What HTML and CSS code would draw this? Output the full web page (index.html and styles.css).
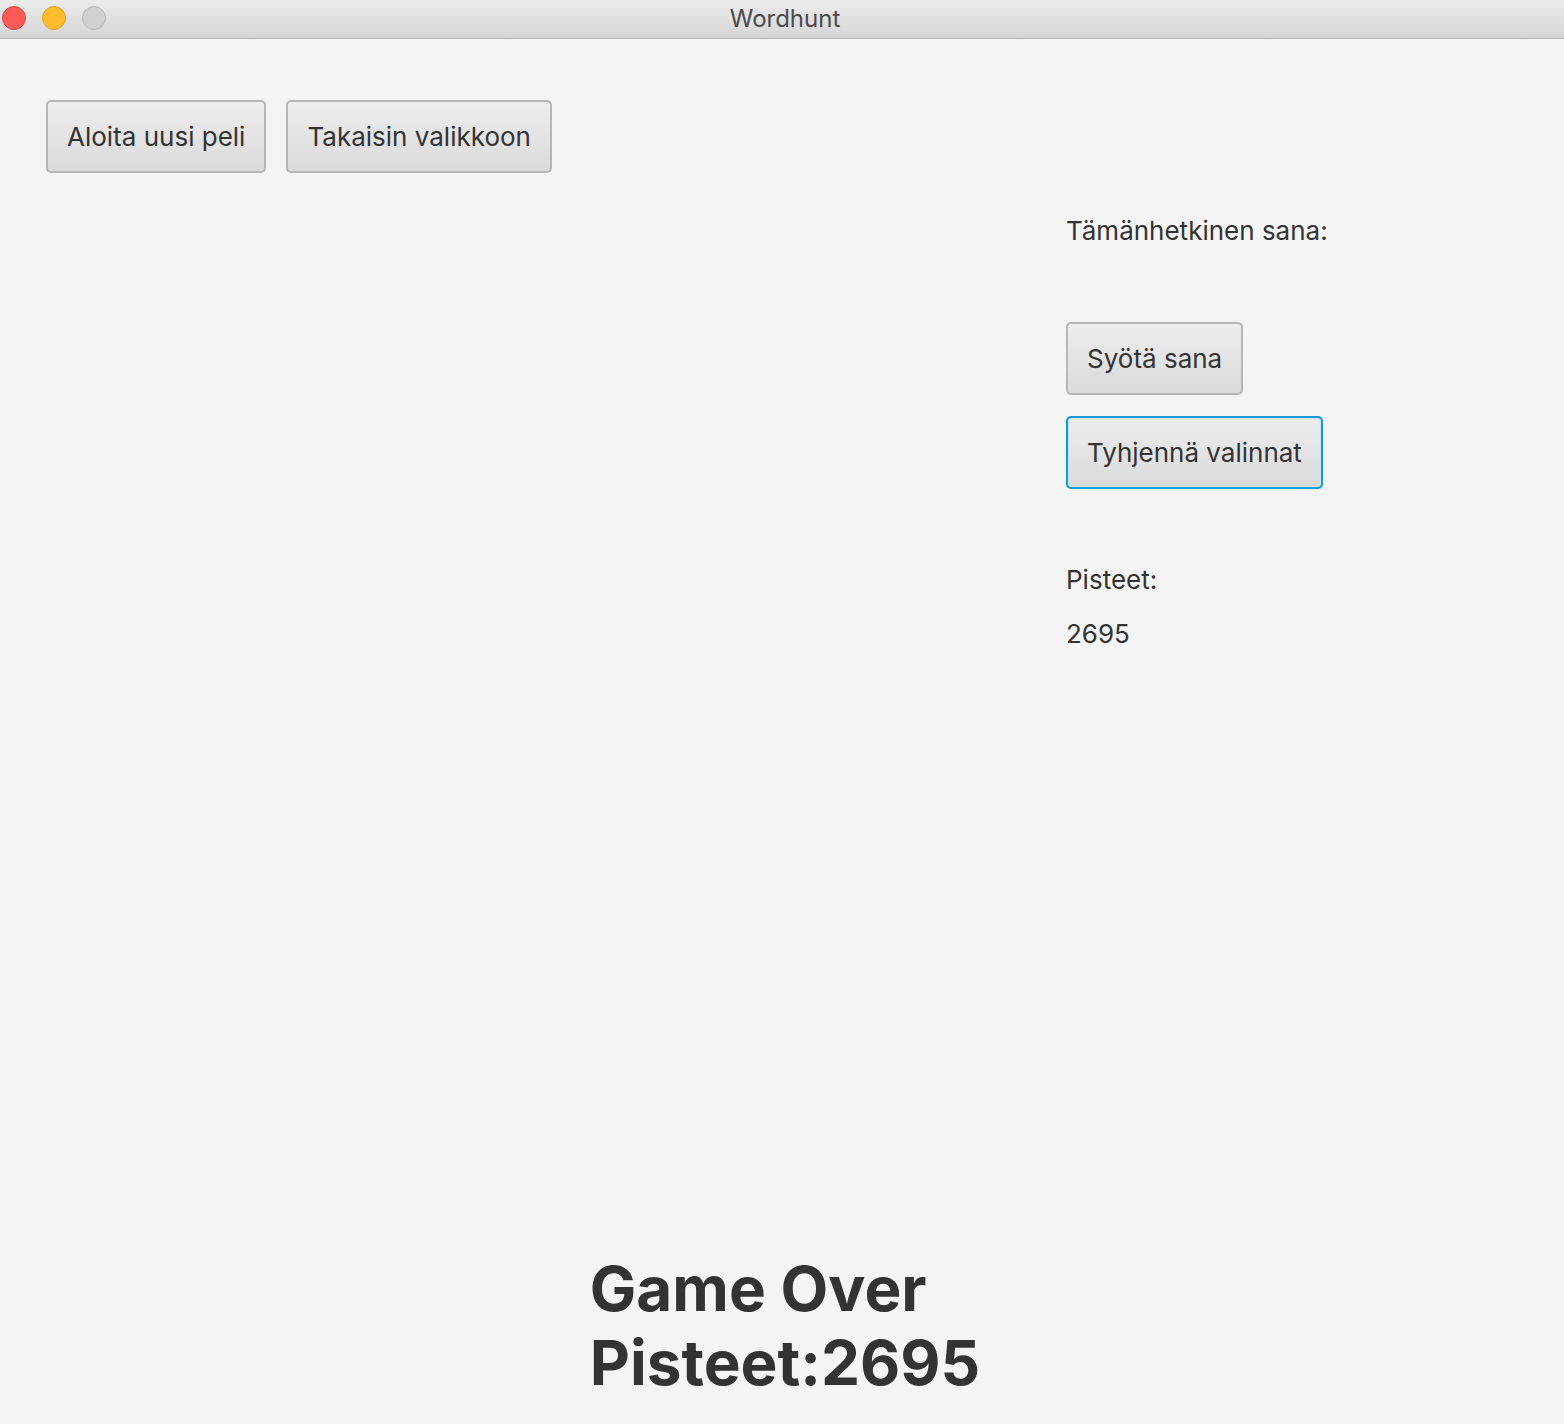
FILE: index.html
```html
<!DOCTYPE html>
<html lang="fi">
<head>
<meta charset="utf-8">
<title>Wordhunt</title>
<link rel="stylesheet" href="styles.css">
</head>
<body>
<div class="window">
  <header class="titlebar">
    <div class="lights">
      <span class="light red"></span>
      <span class="light yellow"></span>
      <span class="light grey"></span>
    </div>
    <div class="title">Wordhunt</div>
  </header>
  <main class="content">
    <div class="toolbar">
      <button class="btn">Aloita uusi peli</button>
      <button class="btn">Takaisin valikkoon</button>
    </div>
    <section class="side">
      <div class="label current">Tämänhetkinen sana:</div>
      <button class="btn">Syötä sana</button>
      <button class="btn focused">Tyhjennä valinnat</button>
      <div class="label points">Pisteet:</div>
      <div class="label score">2695</div>
    </section>
    <footer class="result">
      <div class="result-text">
        <div>Game Over</div>
        <div>Pisteet:2695</div>
      </div>
    </footer>
  </main>
</div>
</body>
</html>
```
FILE: styles.css
```css
* { box-sizing: border-box; }
html, body { margin: 0; padding: 0; }
body {
  background: #f4f4f4;
  font-family: Inter, "Open Sans", "Liberation Sans", sans-serif;
  color: #333;
  width: 1564px;
  height: 1424px;
  overflow: hidden;
}
.window { display: flex; flex-direction: column; height: 1424px; }
.titlebar {
  height: 39px;
  flex: none;
  background: linear-gradient(#ebebeb, #d5d5d5);
  border-bottom: 1px solid #b1b1b1;
  display: grid;
  grid-template-columns: 1fr;
  align-items: center;
  position: relative;
}
.lights {
  position: absolute;
  left: 2px;
  top: 6px;
  display: flex;
  gap: 16px;
}
.light {
  width: 24px; height: 24px; border-radius: 50%;
  display: block;
}
.red { background: #fc5b57; border: 1px solid #de4440; }
.yellow { background: #fdbc2e; border: 1px solid #de9f25; }
.grey { background: #d0d0d0; border: 1px solid #b6b6b6; }
.title {
  text-align: center;
  font-size: 24px;
  color: #4a4a4a;
  padding-left: 6px;
  margin-top: -2px;
}
.content {
  flex: 1;
  display: flex;
  flex-direction: column;
  padding: 61px 0 0 46px;
}
.toolbar { display: flex; gap: 20px; }
.btn {
  font-family: inherit;
  font-size: 26px;
  color: #333;
  height: 73px;
  padding: 0 19px;
  background: linear-gradient(#ededed, #dadada);
  border: 2px solid #b6b6b6;
  border-radius: 5px;
  cursor: default;
}
.btn.focused {
  border: 2px solid #0d9bd9;
  box-shadow: inset 0 0 0 1px #c6e4f2;
}
.side {
  margin-left: 1020px;
  margin-top: 43px;
  display: flex;
  flex-direction: column;
  align-items: flex-start;
}
.label { font-size: 26px; line-height: 30px; }
.current { margin-bottom: 76px; }
.side .btn + .btn { margin-top: 21px; }
.points { margin-top: 76px; }
.score { margin-top: 24px; }
.result {
  margin-top: auto;
  margin-left: -46px;
  display: flex;
  justify-content: center;
  padding-bottom: 24px;
}
.result-text {
  font-weight: 700;
  font-size: 62px;
  line-height: 74px;
  color: #333;
  padding-left: 6px;
}
```
